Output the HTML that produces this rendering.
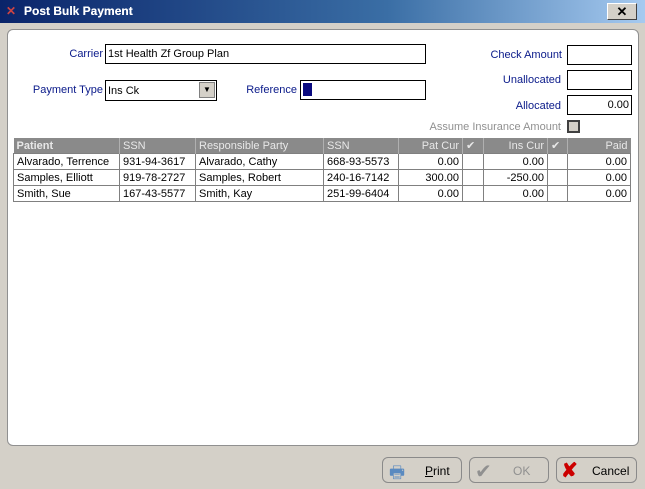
<!DOCTYPE html><html><head><style>
body{margin:0;width:645px;height:486px;background:#d4d0c8;font-family:"Liberation Sans",sans-serif;font-size:11px;position:relative;overflow:hidden}
.a{position:absolute}
.title{left:0;top:0;width:645px;height:23px;background:linear-gradient(90deg,#0a246a,#3a6ea5 60%,#a6caf0);color:#fff;font-weight:bold;font-size:12px}
.lbl{color:#0a1a8a;text-align:right;white-space:nowrap}
.inp{background:#fff;border:1px solid #000;box-sizing:border-box;padding:3px 2px 0;white-space:nowrap}
table{border-collapse:collapse;font-size:11px;table-layout:fixed}
td{border:1px solid #808080;height:15px;padding:0 3px;white-space:nowrap;overflow:hidden}
th{background:#8a8a8a;color:#e8e8e8;font-weight:normal;height:15px;padding:0 3px;border-left:1px solid #b0b0b0;text-align:left}
.r{text-align:right}
.btn{border:1px solid #8a8a8a;border-radius:6px;height:26px;box-sizing:border-box;background:#d4d0c8;font-size:12px}
</style></head><body>
<div class="a title"><span class="a" style="left:6px;top:4px;color:#c44;font-size:12px">✕</span><span class="a" style="left:24px;top:4px;text-shadow:0 0 0 #fff">Post Bulk Payment</span>
<div class="a" style="left:607px;top:3px;width:30px;height:17px;background:#d4d0c8;border:1px solid;border-color:#fff #404040 #404040 #fff;box-sizing:border-box;color:#000;text-align:center;font-size:13px;line-height:15px">✕</div></div>
<div class="a" style="left:7px;top:29px;width:632px;height:417px;background:#fff;border:1px solid #909090;border-radius:6px;box-sizing:border-box"></div>
<div class="a lbl" style="left:40px;top:48px;width:63px">Carrier</div>
<div class="a inp" style="left:105px;top:44px;width:321px;height:20px">1st Health Zf Group Plan</div>
<div class="a lbl" style="left:20px;top:84px;width:83px">Payment Type</div>
<div class="a inp" style="left:105px;top:80px;width:112px;height:21px;padding-top:4px">Ins Ck</div>
<div class="a" style="left:199px;top:82px;width:16px;height:16px;background:#d4d0c8;border:1px solid #808080;box-sizing:border-box;font-size:8px;text-align:center;line-height:14px">▼</div>
<div class="a lbl" style="left:230px;top:84px;width:67px">Reference</div>
<div class="a inp" style="left:300px;top:80px;width:126px;height:20px;padding-top:2px"><div style="width:9px;height:13px;background:#0a0a80"></div></div>
<div class="a lbl" style="left:440px;top:49px;width:122px">Check Amount</div>
<div class="a inp" style="left:567px;top:45px;width:65px;height:20px"></div>
<div class="a lbl" style="left:440px;top:74px;width:121px">Unallocated</div>
<div class="a inp" style="left:567px;top:70px;width:65px;height:20px"></div>
<div class="a lbl" style="left:440px;top:100px;width:121px">Allocated</div>
<div class="a inp" style="left:567px;top:95px;width:65px;height:20px;text-align:right">0.00</div>
<div class="a" style="left:380px;top:121px;width:181px;color:#909090;text-align:right">Assume Insurance Amount</div>
<div class="a" style="left:567px;top:120px;width:13px;height:13px;border:2px solid #404040;box-sizing:border-box;background:#d4d0c8"></div>
<table class="a" style="left:13px;top:138px;width:617px">
<colgroup><col style="width:106px"><col style="width:76px"><col style="width:128px"><col style="width:75px"><col style="width:64px"><col style="width:21px"><col style="width:64px"><col style="width:20px"><col style="width:63px"></colgroup>
<tr><th style="font-weight:bold;border-left:0">Patient</th><th>SSN</th><th>Responsible Party</th><th>SSN</th><th class="r">Pat Cur</th><th>✔</th><th class="r">Ins Cur</th><th>✔</th><th class="r">Paid</th></tr>
<tr><td>Alvarado, Terrence</td><td>931-94-3617</td><td>Alvarado, Cathy</td><td>668-93-5573</td><td class="r">0.00</td><td></td><td class="r">0.00</td><td></td><td class="r">0.00</td></tr>
<tr><td>Samples, Elliott</td><td>919-78-2727</td><td>Samples, Robert</td><td>240-16-7142</td><td class="r">300.00</td><td></td><td class="r">-250.00</td><td></td><td class="r">0.00</td></tr>
<tr><td>Smith, Sue</td><td>167-43-5577</td><td>Smith, Kay</td><td>251-99-6404</td><td class="r">0.00</td><td></td><td class="r">0.00</td><td></td><td class="r">0.00</td></tr>
</table>
<div class="a btn" style="left:382px;top:457px;width:80px"><span class="a" style="left:6px;top:2px;font-size:17px;color:#5a8ac0">🖶</span><span class="a" style="left:42px;top:6px;text-decoration:underline">P</span><span class="a" style="left:50px;top:6px">rint</span></div>
<div class="a btn" style="left:469px;top:457px;width:80px;color:#909090"><span class="a" style="left:5px;top:1px;font-size:20px">✔</span><span class="a" style="left:43px;top:6px">OK</span></div>
<div class="a btn" style="left:556px;top:457px;width:81px"><span class="a" style="left:4px;top:0px;font-size:20px;color:#c00;font-weight:bold">✘</span><span class="a" style="left:35px;top:6px">Cancel</span></div>
</body></html>
